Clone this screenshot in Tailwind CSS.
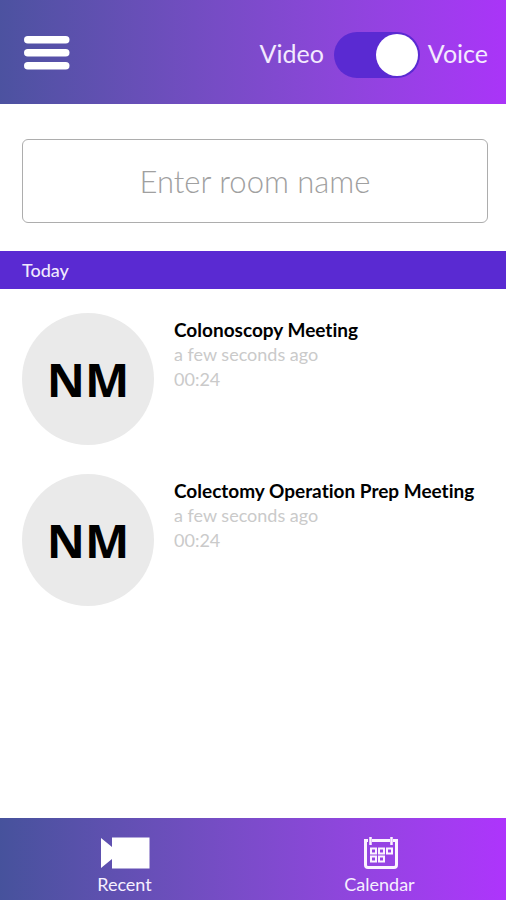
<!DOCTYPE html>
<html lang="en">
<head>
<meta charset="utf-8">
<meta name="viewport" content="width=device-width, initial-scale=1">
<title>Meetings</title>
<script src="https://cdn.jsdelivr.net/npm/@tailwindcss/browser@4"></script>
</head>
<body class="flex min-h-screen flex-col bg-white font-['Lato','Open_Sans',sans-serif] [font-variant-ligatures:none]">
  <header class="flex items-center justify-between bg-linear-to-r from-[#4c52a0] to-[#aa34f8] pt-8 pr-[18px] pb-[26px] pl-5">
    <button type="button" aria-label="Menu" class="px-1 pb-1">
      <svg class="h-9 w-[46px]" viewBox="0 0 46 36" fill="#fff" aria-hidden="true">
        <rect x="0" y="1" width="45.500" height="7.500" rx="3.750"/>
        <rect x="0" y="14" width="45.500" height="7.500" rx="3.750"/>
        <rect x="0" y="27" width="45.500" height="7.500" rx="3.750"/>
      </svg>
    </button>
    <div class="flex items-center text-[25px] leading-8 text-[#f3eafe]">
      <label for="mode" class="pb-1">Video</label>
      <input id="mode" type="checkbox" role="switch" aria-label="Voice mode" checked class="mr-2 ml-2.5 flex h-[46px] w-[86px] appearance-none items-center rounded-full bg-[#5a2ad2] px-0.5 before:size-[42px] before:rounded-full before:bg-white checked:justify-end">
      <label for="mode" class="pb-1">Voice</label>
    </div>
  </header>
  <main class="flex-1">
    <div class="pt-[35px] pr-[18px] pb-7 pl-[22px]">
      <input type="text" aria-label="Room name" placeholder="Enter room name" class="block h-[84px] w-full rounded-md border border-[#adadad] text-center text-[31px] font-light text-gray-700 placeholder:text-[#a0a0a0]">
    </div>
    <h2 class="bg-[#5a2ad2] px-[22px] py-[7px] text-[18px] leading-6 font-medium text-[#f0e9fd]">Today</h2>
    <ul class="flex flex-col gap-[29px] px-[22px] pt-6">
      <li class="flex gap-5">
        <div class="flex size-[132px] shrink-0 items-center justify-center rounded-full bg-[#eaeaea] font-['Open_Sans',sans-serif] text-[47px] font-bold text-black">NM</div>
        <div class="pt-1 text-[18px] leading-[25px] text-[#cacaca]">
          <h3 class="text-[19px] leading-[25px] font-bold text-black">Colonoscopy Meeting</h3>
          <p>a few seconds ago</p>
          <p>00:24</p>
        </div>
      </li>
      <li class="flex gap-5">
        <div class="flex size-[132px] shrink-0 items-center justify-center rounded-full bg-[#eaeaea] font-['Open_Sans',sans-serif] text-[47px] font-bold text-black">NM</div>
        <div class="pt-1 text-[18px] leading-[25px] text-[#cacaca]">
          <h3 class="text-[19px] leading-[25px] font-bold text-black">Colectomy Operation Prep Meeting</h3>
          <p>a few seconds ago</p>
          <p>00:24</p>
        </div>
      </li>
    </ul>
  </main>
  <nav class="grid grid-cols-2 bg-linear-to-r from-[#46529c] to-[#ae34fc] pt-[18px] pb-1 text-[18px] leading-6 text-[#f6efff]">
    <a href="#recent" class="flex flex-col items-center gap-0.5 pr-1">
      <svg class="h-[34px] w-[50px]" viewBox="0 0 50 34" fill="#fff" aria-hidden="true">
        <path d="M1 2 12 11V1.500H49.500V32.500H12V23L1 32Z"/>
      </svg>
      Recent
    </a>
    <a href="#calendar" class="flex flex-col items-center gap-0.5">
      <svg class="h-[34px] w-[36px]" viewBox="0 0 36 34" fill="none" stroke="#fbf3ff" aria-hidden="true">
        <path stroke-width="3" d="M6 4.500H3.500V29Q3.500 31.500 6 31.500H32Q34.500 31.500 34.500 29V4.500H31M10 4.500H28"/>
        <path stroke-width="2.500" d="M8.500 1V9M29.500 1V9"/>
        <path stroke-width="2" d="M9 12.500H14V17.500H9ZM17 12.500H22V17.500H17ZM25 12.500H30V17.500H25ZM9 20.500H14V25.500H9ZM17 20.500H22V25.500H17Z"/>
      </svg>
      Calendar
    </a>
  </nav>
</body>
</html>
